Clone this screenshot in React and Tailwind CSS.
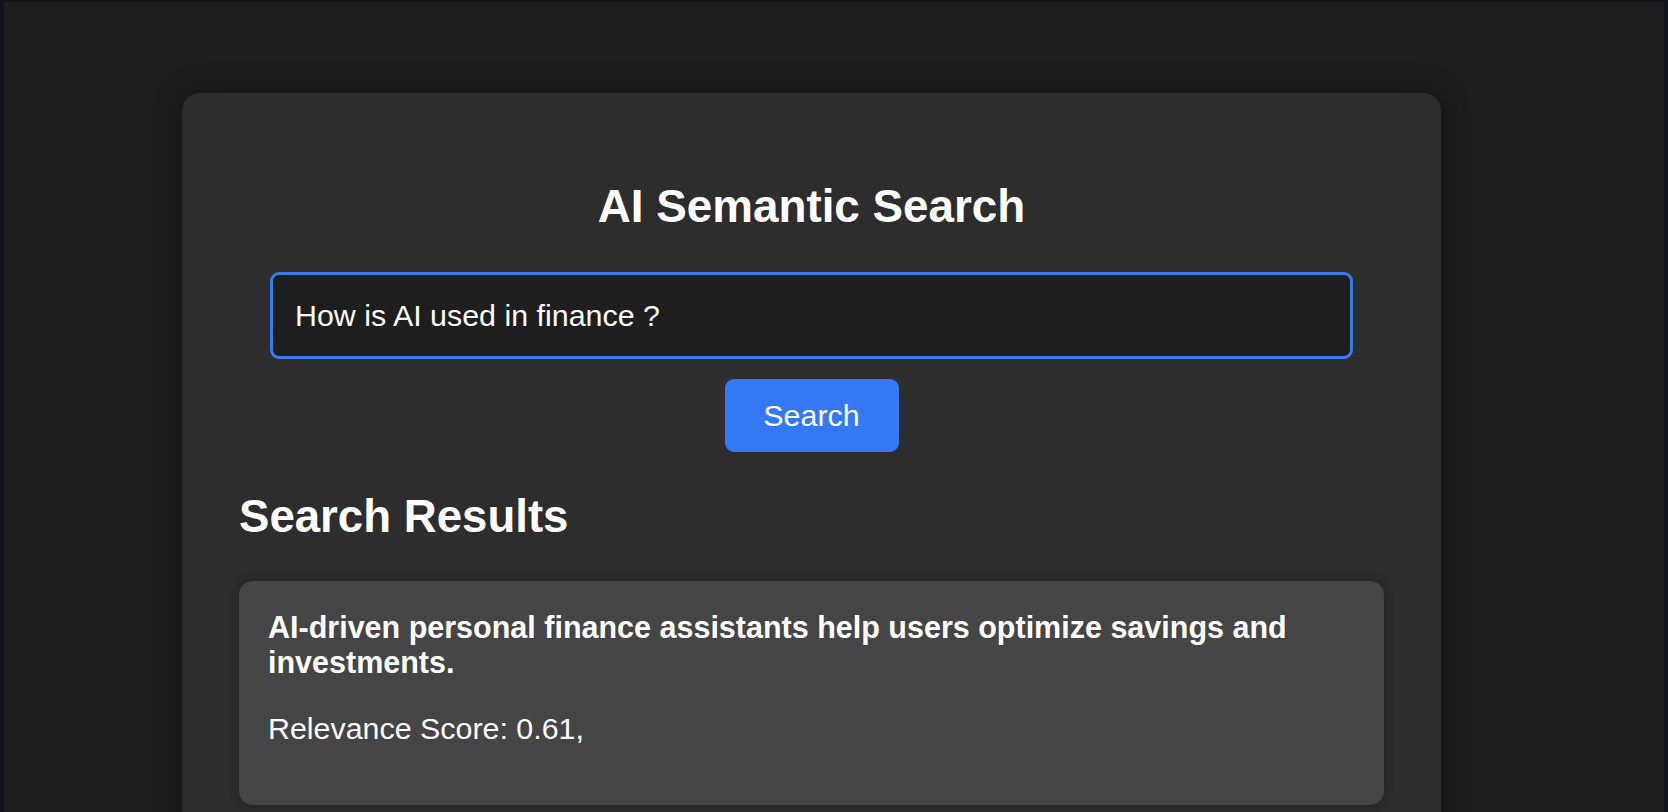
export default function App() {
  return (
    <div
      className="w-full h-[812px] overflow-hidden bg-[#10141a] pt-[2px] px-[4px]"
      style={{ fontFamily: '"Liberation Sans", Arial, sans-serif' }}
    >
      <div className="h-full bg-[#1e1e1e] pt-[91px] overflow-hidden">
        <div className="ml-[178px] w-[1259px] min-h-[900px] rounded-[18px] bg-[#2d2d2d] shadow-[0_0_28px_rgba(0,0,0,0.45)] px-[57px] pt-[88px] flex flex-col">
          <h1 className="text-center text-white font-bold text-[45.8px] leading-[52px]">
            AI Semantic Search
          </h1>
          <div className="mt-[39px] flex justify-center">
            <input
              readOnly
              value="How is AI used in finance ?"
              className="w-[1083px] h-[87px] rounded-[9px] border-[3px] border-[#3b7be9] bg-[#1e1e1e] text-white text-[30.4px] pl-[22px] outline-none"
              style={{ fontFamily: '"Liberation Sans", Arial, sans-serif' }}
            />
          </div>
          <div className="mt-[20px] flex justify-center">
            <button className="w-[174px] h-[73px] rounded-[9px] bg-[#3478f6] text-white text-[30.4px]">
              Search
            </button>
          </div>
          <h2 className="mt-[39px] text-white font-bold text-[45.6px] leading-[52px]">
            Search Results
          </h2>
          <div className="mt-[38px] rounded-[14px] bg-[#454545] shadow-[0_0_10px_rgba(0,0,0,0.25)] pt-[29px] px-[29px] pb-[59px]">
            <p className="text-white font-bold text-[30.5px] leading-[35px]">
              AI-driven personal finance assistants help users optimize savings and investments.
            </p>
            <p className="mt-[31px] text-white text-[30.4px] leading-[35px]">
              Relevance Score: 0.61,
            </p>
          </div>
        </div>
      </div>
    </div>
  );
}
